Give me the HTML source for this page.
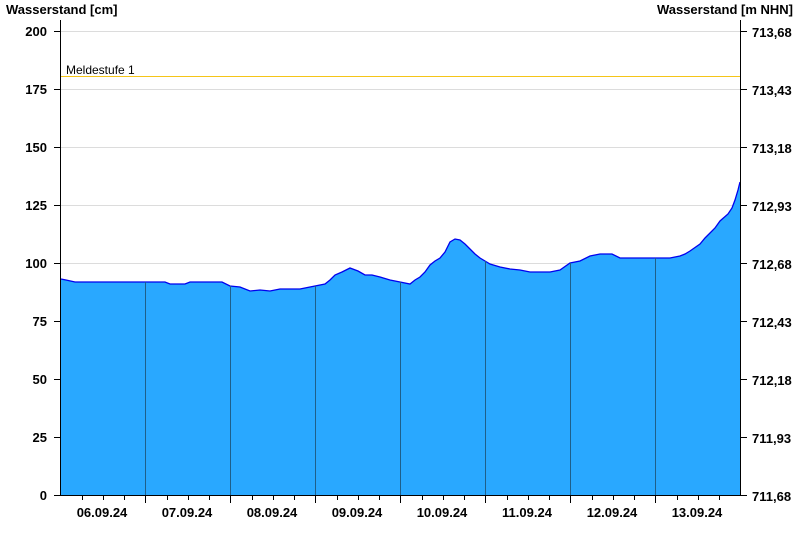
<!DOCTYPE html>
<html><head><meta charset="utf-8"><style>
html,body{margin:0;padding:0;background:#fff;width:800px;height:550px;overflow:hidden}
text{font-family:"Liberation Sans",Arial,sans-serif;font-size:13px;font-weight:bold;fill:#000}
</style></head><body>
<svg width="800" height="550" xmlns="http://www.w3.org/2000/svg">
<g stroke="#dcdcdc" stroke-width="1">
<line x1="61" y1="31.5" x2="740" y2="31.5"/><line x1="61" y1="89.5" x2="740" y2="89.5"/>
<line x1="61" y1="147.5" x2="740" y2="147.5"/><line x1="61" y1="205.5" x2="740" y2="205.5"/>
<line x1="61" y1="263.5" x2="740" y2="263.5"/><line x1="61" y1="321.5" x2="740" y2="321.5"/>
<line x1="61" y1="379.5" x2="740" y2="379.5"/><line x1="61" y1="437.5" x2="740" y2="437.5"/>
</g>
<line x1="61" y1="76.5" x2="740" y2="76.5" stroke="#f5c518" stroke-width="1"/>
<text x="66" y="74" style="font-weight:normal;font-size:12px">Meldestufe 1</text>
<path d="M61,279 L66,280 L75,282 L145,282 L165,282 L170,284 L185,284 L190,282 L222,282 L230,286 L240,287 L250,291 L260,290 L270,291 L280,289 L300,289 L310,287 L315,286 L325,284 L330,280 L335,275 L342,272 L350,268 L358,271 L365,275 L372,275 L380,277 L390,280 L400,282 L410,284 L415,280 L420,277 L425,272 L430,265 L435,261 L440,258 L445,252 L450,242 L455,239 L460,240 L465,244 L470,249 L475,254 L480,258 L485,261 L490,264 L500,267 L510,269 L520,270 L530,272 L550,272 L560,270 L570,263 L580,261 L590,256 L600,254 L612,254 L620,258 L630,258 L660,258 L670,258 L680,256 L685,254 L690,251 L700,244 L705,238 L710,233 L715,228 L720,221 L728,214 L732,208 L735,200 L738,190 L740,182 L740,495 L61,495 Z" fill="#29a8ff" stroke="none"/>
<path d="M61,279 L66,280 L75,282 L145,282 L165,282 L170,284 L185,284 L190,282 L222,282 L230,286 L240,287 L250,291 L260,290 L270,291 L280,289 L300,289 L310,287 L315,286 L325,284 L330,280 L335,275 L342,272 L350,268 L358,271 L365,275 L372,275 L380,277 L390,280 L400,282 L410,284 L415,280 L420,277 L425,272 L430,265 L435,261 L440,258 L445,252 L450,242 L455,239 L460,240 L465,244 L470,249 L475,254 L480,258 L485,261 L490,264 L500,267 L510,269 L520,270 L530,272 L550,272 L560,270 L570,263 L580,261 L590,256 L600,254 L612,254 L620,258 L630,258 L660,258 L670,258 L680,256 L685,254 L690,251 L700,244 L705,238 L710,233 L715,228 L720,221 L728,214 L732,208 L735,200 L738,190 L740,182" fill="none" stroke="#0000ee" stroke-width="1.3"/>
<g stroke="#1e5f8a" stroke-width="1">
<line x1="145.5" y1="282" x2="145.5" y2="495"/><line x1="230.5" y1="286" x2="230.5" y2="495"/>
<line x1="315.5" y1="286" x2="315.5" y2="495"/><line x1="400.5" y1="282" x2="400.5" y2="495"/>
<line x1="485.5" y1="261" x2="485.5" y2="495"/><line x1="570.5" y1="263" x2="570.5" y2="495"/>
<line x1="655.5" y1="258" x2="655.5" y2="495"/>
</g>
<g stroke="#000" stroke-width="1">
<line x1="60.5" y1="20" x2="60.5" y2="496"/>
<line x1="740.5" y1="20" x2="740.5" y2="496"/>
<line x1="60" y1="495.5" x2="741" y2="495.5"/>
<path d="M54,31.5h6M54,89.5h6M54,147.5h6M54,205.5h6M54,263.5h6M54,321.5h6M54,379.5h6M54,437.5h6M54,495.5h6"/>
<path d="M741,31.5h6M741,89.5h6M741,147.5h6M741,205.5h6M741,263.5h6M741,321.5h6M741,379.5h6M741,437.5h6M741,495.5h6"/>
<path d="M145.5,496v7M230.5,496v7M315.5,496v7M400.5,496v7M485.5,496v7M570.5,496v7M655.5,496v7"/>
<path d="M82.5,496v4M103.5,496v4M124.5,496v4M167.5,496v4M188.5,496v4M209.5,496v4M252.5,496v4M273.5,496v4M294.5,496v4M337.5,496v4M358.5,496v4M379.5,496v4M422.5,496v4M443.5,496v4M464.5,496v4M507.5,496v4M528.5,496v4M549.5,496v4M592.5,496v4M613.5,496v4M634.5,496v4M677.5,496v4M698.5,496v4M719.5,496v4"/>
</g>
<text x="6" y="14">Wasserstand [cm]</text>
<text x="793" y="14" text-anchor="end">Wasserstand [m NHN]</text>
<g text-anchor="end">
<text x="47" y="36">200</text><text x="47" y="94">175</text><text x="47" y="152">150</text>
<text x="47" y="210">125</text><text x="47" y="268">100</text><text x="47" y="326">75</text>
<text x="47" y="384">50</text><text x="47" y="442">25</text><text x="47" y="500">0</text>
</g>
<g>
<text x="752" y="37">713,68</text><text x="752" y="95">713,43</text><text x="752" y="153">713,18</text>
<text x="752" y="211">712,93</text><text x="752" y="269">712,68</text><text x="752" y="327">712,43</text>
<text x="752" y="385">712,18</text><text x="752" y="443">711,93</text><text x="752" y="501">711,68</text>
</g>
<g text-anchor="middle">
<text x="102" y="517">06.09.24</text><text x="187" y="517">07.09.24</text><text x="272" y="517">08.09.24</text>
<text x="357" y="517">09.09.24</text><text x="442" y="517">10.09.24</text><text x="527" y="517">11.09.24</text>
<text x="612" y="517">12.09.24</text><text x="697" y="517">13.09.24</text>
</g>
</svg>
</body></html>
